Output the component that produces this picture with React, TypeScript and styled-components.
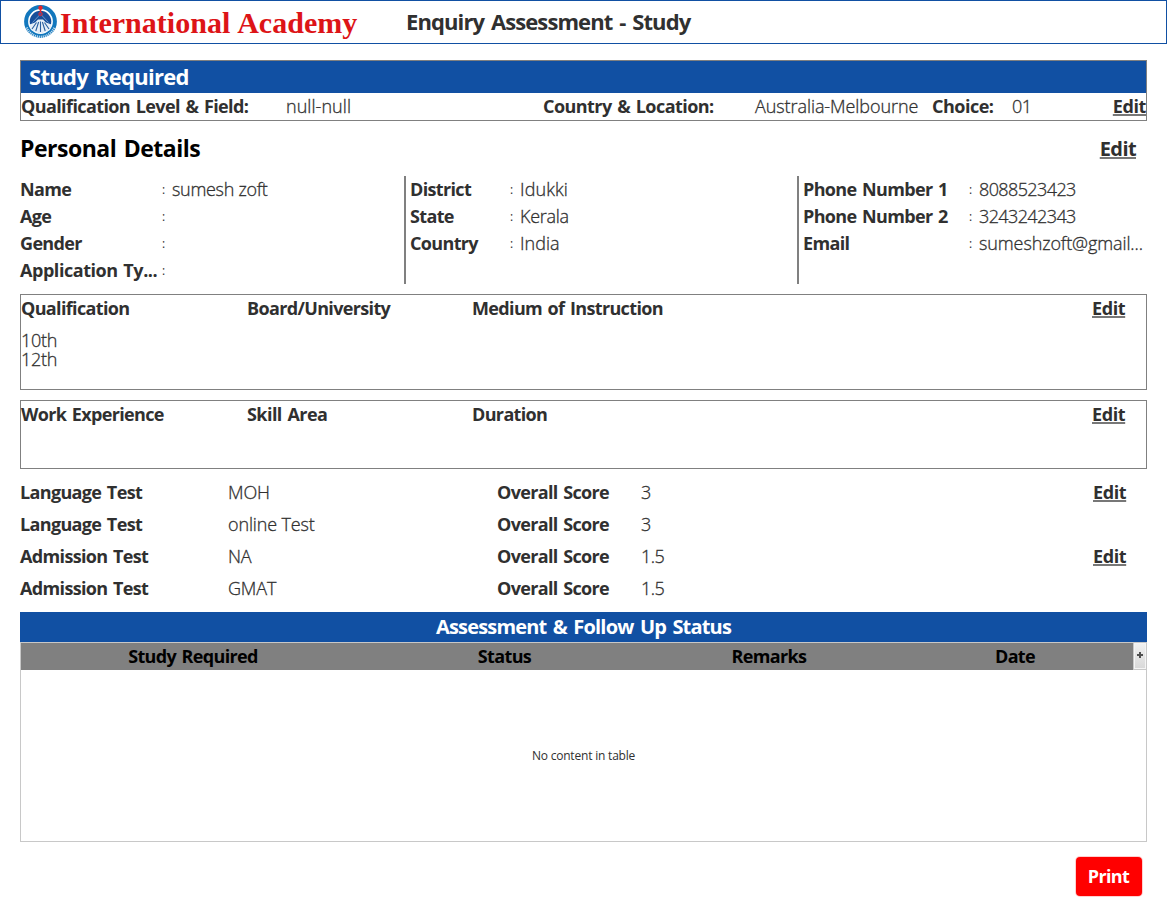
import React from "react";
import styled, { createGlobalStyle, css } from "styled-components";

const BLUE = "#1150a3";
const GRAY = "#808080";
const INK = "#303030";

const GlobalStyle = createGlobalStyle`
  *, *::before, *::after { box-sizing: border-box; }
  body {
    margin: 0;
    background: #fff;
    color: ${INK};
    font-family: "Open Sans", "Noto Sans", sans-serif;
    font-size: 18px;
  }
`;

type Tracked = { $track?: number };
const tracking = (fallback: number) => css<Tracked>`
  letter-spacing: ${({ $track }) => $track ?? fallback}px;
`;

const Page = styled.div`
  height: 906px;
  overflow: hidden;
`;

const Header = styled.header`
  display: flex;
  height: 44px;
  padding-left: 22px;
  border: 1px solid ${BLUE};
`;

const Brand = styled.div`
  display: flex;
  width: 383px;
  gap: 2px;
`;

const Logo = styled.svg`
  width: 35px;
  height: 35px;
  margin-top: 3px;
`;

const BrandName = styled.span`
  color: #dd1417;
  font: bold 30px/44px "Liberation Serif", serif;
  letter-spacing: 0.02px;
  word-spacing: 1px;
  white-space: nowrap;
`;

const PageTitle = styled.h1`
  margin: 0;
  font-size: 22px;
  line-height: 41px;
  letter-spacing: -0.9px;
  word-spacing: 2px;
`;

const Content = styled.main`
  padding: 16px 20px 0;
`;

const Label = styled.span<Tracked>`
  font-weight: 700;
  white-space: nowrap;
  word-spacing: 1.5px;
  ${tracking(-0.65)}
`;

const Value = styled.span<Tracked>`
  font-weight: 300;
  white-space: nowrap;
  -webkit-text-stroke: 0.3px currentColor;
  ${tracking(-0.15)}
`;

const EditLink = styled.a<{ $large?: boolean }>`
  font-size: ${({ $large }) => ($large ? 20 : 18)}px;
  font-weight: 700;
  letter-spacing: ${({ $large }) => ($large ? -0.6 : -0.4)}px;
  text-decoration: underline 2px #777;
  text-decoration-skip-ink: none;
  text-underline-offset: 1px;
  cursor: pointer;
`;

const Panel = styled.section<{ $height: number }>`
  height: ${({ $height }) => $height}px;
  border: 1px solid ${GRAY};
`;

const StudyTitle = styled.h2`
  height: 32px;
  margin: 0;
  padding-left: 8px;
  background: ${BLUE};
  color: #fff;
  font-size: 22px;
  line-height: 31px;
  letter-spacing: -0.72px;
  word-spacing: 2px;
`;

const StudyRow = styled.div`
  display: grid;
  grid-template-columns: 265px 257px 212px 177px 80px 60px 1fr;
  line-height: 27px;

  ${EditLink} { justify-self: end; }
`;

const PersonalHeading = styled.div`
  display: flex;
  justify-content: space-between;
  height: 55px;
  padding-right: 11px;
  line-height: 55px;
`;

const PersonalTitle = styled.h2`
  margin: 0;
  color: #000;
  font-size: 23px;
  line-height: 55px;
  letter-spacing: -0.49px;
  word-spacing: 2px;
`;

const PersonalGrid = styled.div`
  display: grid;
  grid-template-columns: 384px 393px 1fr;
  height: 108px;
  margin-bottom: 10px;
`;

const Details = styled.dl<{ $labelWidth: number; $divided?: boolean }>`
  display: grid;
  grid-template-columns: ${({ $labelWidth }) => $labelWidth}px 10px 1fr;
  grid-auto-rows: 27px;
  min-width: 0;
  margin: 0;
  line-height: 27px;
  ${({ $divided }) => $divided && css`
    padding-left: 4px;
    border-left: 2px solid ${GRAY};
  `}
`;

const Colon = styled.span`
  font-size: 12px;
  font-weight: 400;
`;

const ColumnsRow = styled.div`
  display: grid;
  grid-template-columns: 226px 225px 620px 1fr;
  height: 28px;
  line-height: 27px;
`;

const QualificationList = styled.div`
  display: flex;
  flex-direction: column;
  padding-top: 8px;
  line-height: 19px;
`;

const WorkPanel = styled(Panel)`
  margin-top: 10px;
`;

const Tests = styled.section`
  padding-top: 7px;
`;

const TestRow = styled.div`
  display: grid;
  grid-template-columns: 208px 269px 144px 452px 1fr;
  height: 32px;
  line-height: 32px;
`;

const StatusTitle = styled.h2`
  height: 30px;
  margin: 8px 0 0;
  background: ${BLUE};
  color: #fff;
  font-size: 20px;
  line-height: 29px;
  letter-spacing: -0.82px;
  word-spacing: 2px;
  text-align: center;
`;

const Table = styled.section`
  height: 200px;
  border: 1px solid #c8c8c8;
`;

const TableHead = styled.div`
  display: grid;
  grid-template-columns: 344px 279px 250px 1fr 13px;
  height: 27px;
  background: ${GRAY};
  color: #000;
  line-height: 27px;
  text-align: center;

  ${Label}:nth-child(4) { padding-left: 3px; }
`;

const ColumnMenu = styled.button`
  display: grid;
  place-items: center;
  padding: 0 0 2px;
  border: 1px solid #c8c8c8;
  border-top: 0;
  border-right: 0;
  background: linear-gradient(#f2f2f2, #d8d8d8);
  box-shadow: inset 0 0 0 1px #f4f4f4;
`;

const Placeholder = styled.div`
  padding-top: 77px;
  font-size: 12px;
  font-weight: 400;
  line-height: 17px;
  letter-spacing: -0.2px;
  text-align: center;
`;

const Footer = styled.footer`
  display: flex;
  justify-content: flex-end;
  padding: 15px 5px 0 0;
`;

const PrintButton = styled.button`
  width: 66px;
  height: 39px;
  padding: 0 1px 2px 0;
  border: 0;
  border-radius: 4px;
  background: #f00;
  box-shadow: 0 0 0 1px #ffd0d0;
  color: #fff;
  font: 700 18px "Open Sans", sans-serif;
  letter-spacing: -0.6px;
`;

type Field = { label: string; value?: string; labelTrack?: number; valueTrack?: number };

const fieldColumns: { labelWidth: number; fields: Field[] }[] = [
  {
    labelWidth: 142,
    fields: [
      { label: "Name", value: "sumesh zoft", valueTrack: -0.3 },
      { label: "Age" },
      { label: "Gender" },
      { label: "Application Ty...", labelTrack: -0.45 },
    ],
  },
  {
    labelWidth: 100,
    fields: [
      { label: "District", value: "Idukki", valueTrack: 0.1 },
      { label: "State", value: "Kerala", valueTrack: -0.3 },
      { label: "Country", value: "India", valueTrack: 0 },
    ],
  },
  {
    labelWidth: 166,
    fields: [
      { label: "Phone Number 1", value: "8088523423", valueTrack: -0.6 },
      { label: "Phone Number 2", value: "3243242343", valueTrack: -0.6 },
      { label: "Email", value: "sumeshzoft@gmail...", valueTrack: -0.1 },
    ],
  },
];

const tests = [
  { kind: "Language Test", name: "MOH", score: "3", editable: true },
  { kind: "Language Test", name: "online Test", score: "3", editable: false },
  { kind: "Admission Test", name: "NA", score: "1.5", editable: true },
  { kind: "Admission Test", name: "GMAT", score: "1.5", editable: false },
];

function AcademyLogo() {
  return (
    <Logo viewBox="0 0 35 35" aria-hidden="true">
      <circle cx="17.5" cy="17.5" r="14.4" fill="#fff" stroke="#1277bd" strokeWidth="4" />
      <path d="M3.6 23.5 A15 15 0 0 0 31.4 23.5" fill="none" stroke="#fff" strokeWidth="2.4" strokeDasharray="1.1 .9" opacity=".75" />
      <circle cx="17.5" cy="17.6" r="10.8" fill="#174f9b" />
      <path d="M6.5 20.5 L12 18.5 L15 15.5 H20 L23 18.5 L28.5 20.5 L27 26 L17.5 29.5 L8 26Z" fill="#e6eef7" />
      <path d="M13.5 18.5 L9 25 M15.6 18 L12.8 27 M17.5 17.5 V28 M19.4 18 L22.2 27 M21.5 18.5 L26 25" stroke="#2a5f9f" strokeWidth="1.1" />
      <path d="M9.5 18.5 L17.5 10 L25.5 18.5" fill="none" stroke="#8fb2d9" strokeWidth=".7" />
      <path d="M17.5 4 V11" stroke="#e5252a" strokeWidth="1.4" />
      <circle cx="17.5" cy="3.8" r="2.2" fill="#e5252a" />
      <circle cx="17.5" cy="10" r="1.7" fill="#54508f" stroke="#e5252a" />
    </Logo>
  );
}

export default function App() {
  return (
    <>
      <GlobalStyle />
      <Page>
        <Header>
          <Brand>
            <AcademyLogo />
            <BrandName>International Academy</BrandName>
          </Brand>
          <PageTitle>Enquiry Assessment - Study</PageTitle>
        </Header>
        <Content>
          <Panel $height={61}>
            <StudyTitle>Study Required</StudyTitle>
            <StudyRow>
              <Label $track={-0.6}>Qualification Level &amp; Field:</Label>
              <Value $track={0.05}>null-null</Value>
              <Label $track={-0.56}>Country &amp; Location:</Label>
              <Value $track={-0.08}>Australia-Melbourne</Value>
              <Label $track={-0.5}>Choice:</Label>
              <Value $track={-0.5}>01</Value>
              <EditLink>Edit</EditLink>
            </StudyRow>
          </Panel>
          <PersonalHeading>
            <PersonalTitle>Personal Details</PersonalTitle>
            <EditLink $large>Edit</EditLink>
          </PersonalHeading>
          <PersonalGrid>
            {fieldColumns.map((column, index) => (
              <Details key={index} $labelWidth={column.labelWidth} $divided={index > 0}>
                {column.fields.map((field) => (
                  <React.Fragment key={field.label}>
                    <Label $track={field.labelTrack}>{field.label}</Label>
                    <Colon>:</Colon>
                    <Value $track={field.valueTrack}>{field.value}</Value>
                  </React.Fragment>
                ))}
              </Details>
            ))}
          </PersonalGrid>
          <Panel $height={96}>
            <ColumnsRow>
              <Label>Qualification</Label>
              <Label>Board/University</Label>
              <Label>Medium of Instruction</Label>
              <EditLink>Edit</EditLink>
            </ColumnsRow>
            <QualificationList>
              <Value $track={-0.3}>10th</Value>
              <Value $track={-0.3}>12th</Value>
            </QualificationList>
          </Panel>
          <WorkPanel $height={69}>
            <ColumnsRow>
              <Label>Work Experience</Label>
              <Label $track={-0.55}>Skill Area</Label>
              <Label>Duration</Label>
              <EditLink>Edit</EditLink>
            </ColumnsRow>
          </WorkPanel>
          <Tests>
            {tests.map((test, index) => (
              <TestRow key={index}>
                <Label>{test.kind}</Label>
                <Value>{test.name}</Value>
                <Label>Overall Score</Label>
                <Value $track={-0.5}>{test.score}</Value>
                {test.editable && <EditLink>Edit</EditLink>}
              </TestRow>
            ))}
          </Tests>
          <StatusTitle>Assessment &amp; Follow Up Status</StatusTitle>
          <Table>
            <TableHead>
              <Label>Study Required</Label>
              <Label>Status</Label>
              <Label>Remarks</Label>
              <Label>Date</Label>
              <ColumnMenu aria-label="Columns">
                <svg width="6" height="6" viewBox="0 0 6 6">
                  <path d="M2 0h2v2h2v2H4v2H2V4H0V2h2z" fill="#505050" />
                </svg>
              </ColumnMenu>
            </TableHead>
            <Placeholder>No content in table</Placeholder>
          </Table>
          <Footer>
            <PrintButton>Print</PrintButton>
          </Footer>
        </Content>
      </Page>
    </>
  );
}
